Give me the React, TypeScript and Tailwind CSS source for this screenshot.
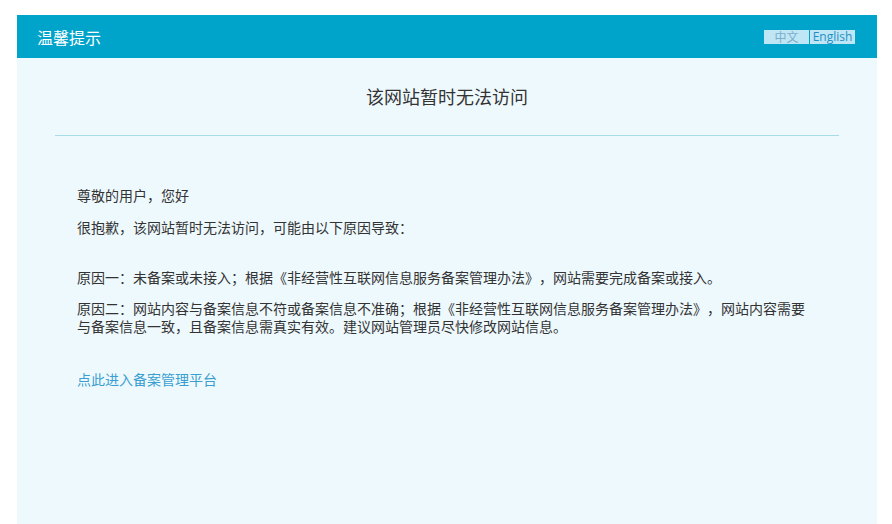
import React from "react";

export default function App() {
  const font = { fontFamily: '"Noto Sans CJK SC", "Liberation Sans", sans-serif' };
  return (
    <div className="min-h-[524px] w-[892px] bg-white pt-[15px] [text-spacing-trim:space-all]" style={font}>
      <div className="ml-[17px] flex h-[509px] w-[860px] flex-col bg-[#eef9fe]">
        <div className="flex h-[43px] items-center justify-between bg-[#00a3c9] pl-[20px] pr-[22px]">
          <span className="text-[16px] leading-[20px] text-white">温馨提示</span>
          <div className="flex gap-[1px]">
            <span className="flex h-[14px] w-[45px] items-center justify-center bg-[#bfe6f4] text-[12px] leading-[14px] text-[#7aaecb]">中文</span>
            <span className="flex h-[14px] w-[45px] items-center justify-center bg-[#bfe6f4] text-[12px] leading-[14px] text-[#1e90c8]" style={{ fontFamily: '"Open Sans", "Liberation Sans", sans-serif' }}>English</span>
          </div>
        </div>
        <div className="pt-[26px] text-center text-[18px] leading-[24px] text-[#333]">该网站暂时无法访问</div>
        <div className="mx-[38px] mt-[27px] h-px bg-[#a8dbe6]" />
        <div className="px-[60px] pt-[50px] text-[14px] leading-[18px] text-[#333]">
          <p>尊敬的用户，您好</p>
          <p className="mt-[14px]">很抱歉，该网站暂时无法访问，可能由以下原因导致：</p>
          <p className="mt-[32px]">原因一：未备案或未接入；根据《非经营性互联网信息服务备案管理办法》，网站需要完成备案或接入。</p>
          <p className="mt-[13px] leading-[18px]">原因二：网站内容与备案信息不符或备案信息不准确；根据《非经营性互联网信息服务备案管理办法》，网站内容需要与备案信息一致，且备案信息需真实有效。建议网站管理员尽快修改网站信息。</p>
          <p className="mt-[35px]">
            <a className="text-[#3a9fd0]">点此进入备案管理平台</a>
          </p>
        </div>
      </div>
    </div>
  );
}
